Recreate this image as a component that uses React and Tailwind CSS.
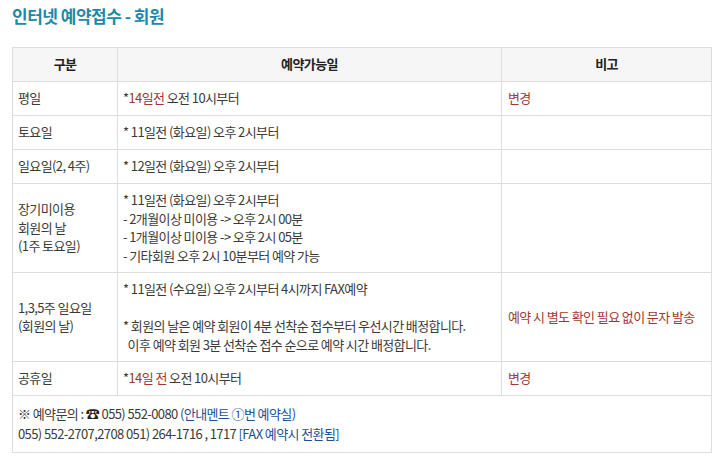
const red = "text-[#a3362f]";

const rows = [
  {
    label: ["평일"],
    body: (
      <>
        *<span className={red}>14일전</span> 오전 10시부터
      </>
    ),
    note: "변경",
  },
  { label: ["토요일"], body: "* 11일전 (화요일) 오후 2시부터" },
  { label: ["일요일(2, 4주)"], body: "* 12일전 (화요일) 오후 2시부터" },
  {
    label: ["장기미이용", "회원의 날", "(1주 토요일)"],
    body: (
      <>
        <div>* 11일전 (화요일) 오후 2시부터</div>
        <div>- 2개월이상 미이용 -&gt; 오후 2시 00분</div>
        <div>- 1개월이상 미이용 -&gt; 오후 2시 05분</div>
        <div>- 기타회원 오후 2시 10분부터 예약 가능</div>
      </>
    ),
  },
  {
    label: ["1,3,5주 일요일", "(회원의 날)"],
    body: (
      <>
        <div>* 11일전 (수요일) 오후 2시부터 4시까지 FAX예약</div>
        <div>&nbsp;</div>
        <div>* 회원의 날은 예약 회원이 4분 선착순 접수부터 우선시간 배정합니다.</div>
        <div>&nbsp;&nbsp;이후 예약 회원 3분 선착순 접수 순으로 예약 시간 배정합니다.</div>
      </>
    ),
    note: "예약 시 별도 확인 필요 없이 문자 발송",
  },
  {
    label: ["공휴일"],
    body: (
      <>
        *<span className={red}>14일 전</span> 오전 10시부터
      </>
    ),
    note: "변경",
  },
];

export default function App() {
  return (
    <div
      className="w-[720px] h-[456px] bg-white px-3 pt-[4px] text-[#3a3a3a] text-[13px] leading-[18.5px] tracking-[-0.6px]"
      style={{ fontFamily: '"Noto Sans CJK KR", "Noto Sans", sans-serif' }}
    >
      <h2 className="text-[17px] font-bold text-[#1b8aa6] leading-[24px] tracking-[-0.5px]">
        인터넷 예약접수 - 회원
      </h2>
      <table className="mt-[19px] w-[699px] border-collapse table-fixed">
        <colgroup>
          <col className="w-[105px]" />
          <col className="w-[384px]" />
          <col className="w-[210px]" />
        </colgroup>
        <thead>
          <tr className="h-[34px] bg-[#f6f6f6]">
            <th className="border border-[#dddddd] font-bold text-[#222]">구분</th>
            <th className="border border-[#dddddd] font-bold text-[#222]">예약가능일</th>
            <th className="border border-[#dddddd] font-bold text-[#222]">비고</th>
          </tr>
        </thead>
        <tbody>
          {rows.map((row, i) => (
            <tr key={i} className="h-[34px]">
              <td className="border border-[#dddddd] px-[5px] py-[7px] align-middle">
                {row.label.map((l) => (
                  <div key={l}>{l}</div>
                ))}
              </td>
              <td className="border border-[#dddddd] px-[5px] py-[7px] align-middle">
                {row.body}
              </td>
              <td className={`border border-[#dddddd] px-[6px] py-[7px] align-middle whitespace-nowrap ${red}`}>
                {row.note}
              </td>
            </tr>
          ))}
          <tr>
            <td colSpan={3} className="border border-[#dddddd] px-[5px] pt-[7px] pb-[8px] leading-[20px]">
              <div>
                ※ 예약문의 : <span className="text-[#222] text-[14px]">☎</span> 055) 552-0080{" "}
                <span className="text-[#1d4f91]">(안내멘트 ①번 예약실)</span>
              </div>
              <div>
                055) 552-2707,2708 051) 264-1716 , 1717{" "}
                <span className="text-[#1d4f91]">[FAX 예약시 전환됨]</span>
              </div>
            </td>
          </tr>
        </tbody>
      </table>
    </div>
  );
}
